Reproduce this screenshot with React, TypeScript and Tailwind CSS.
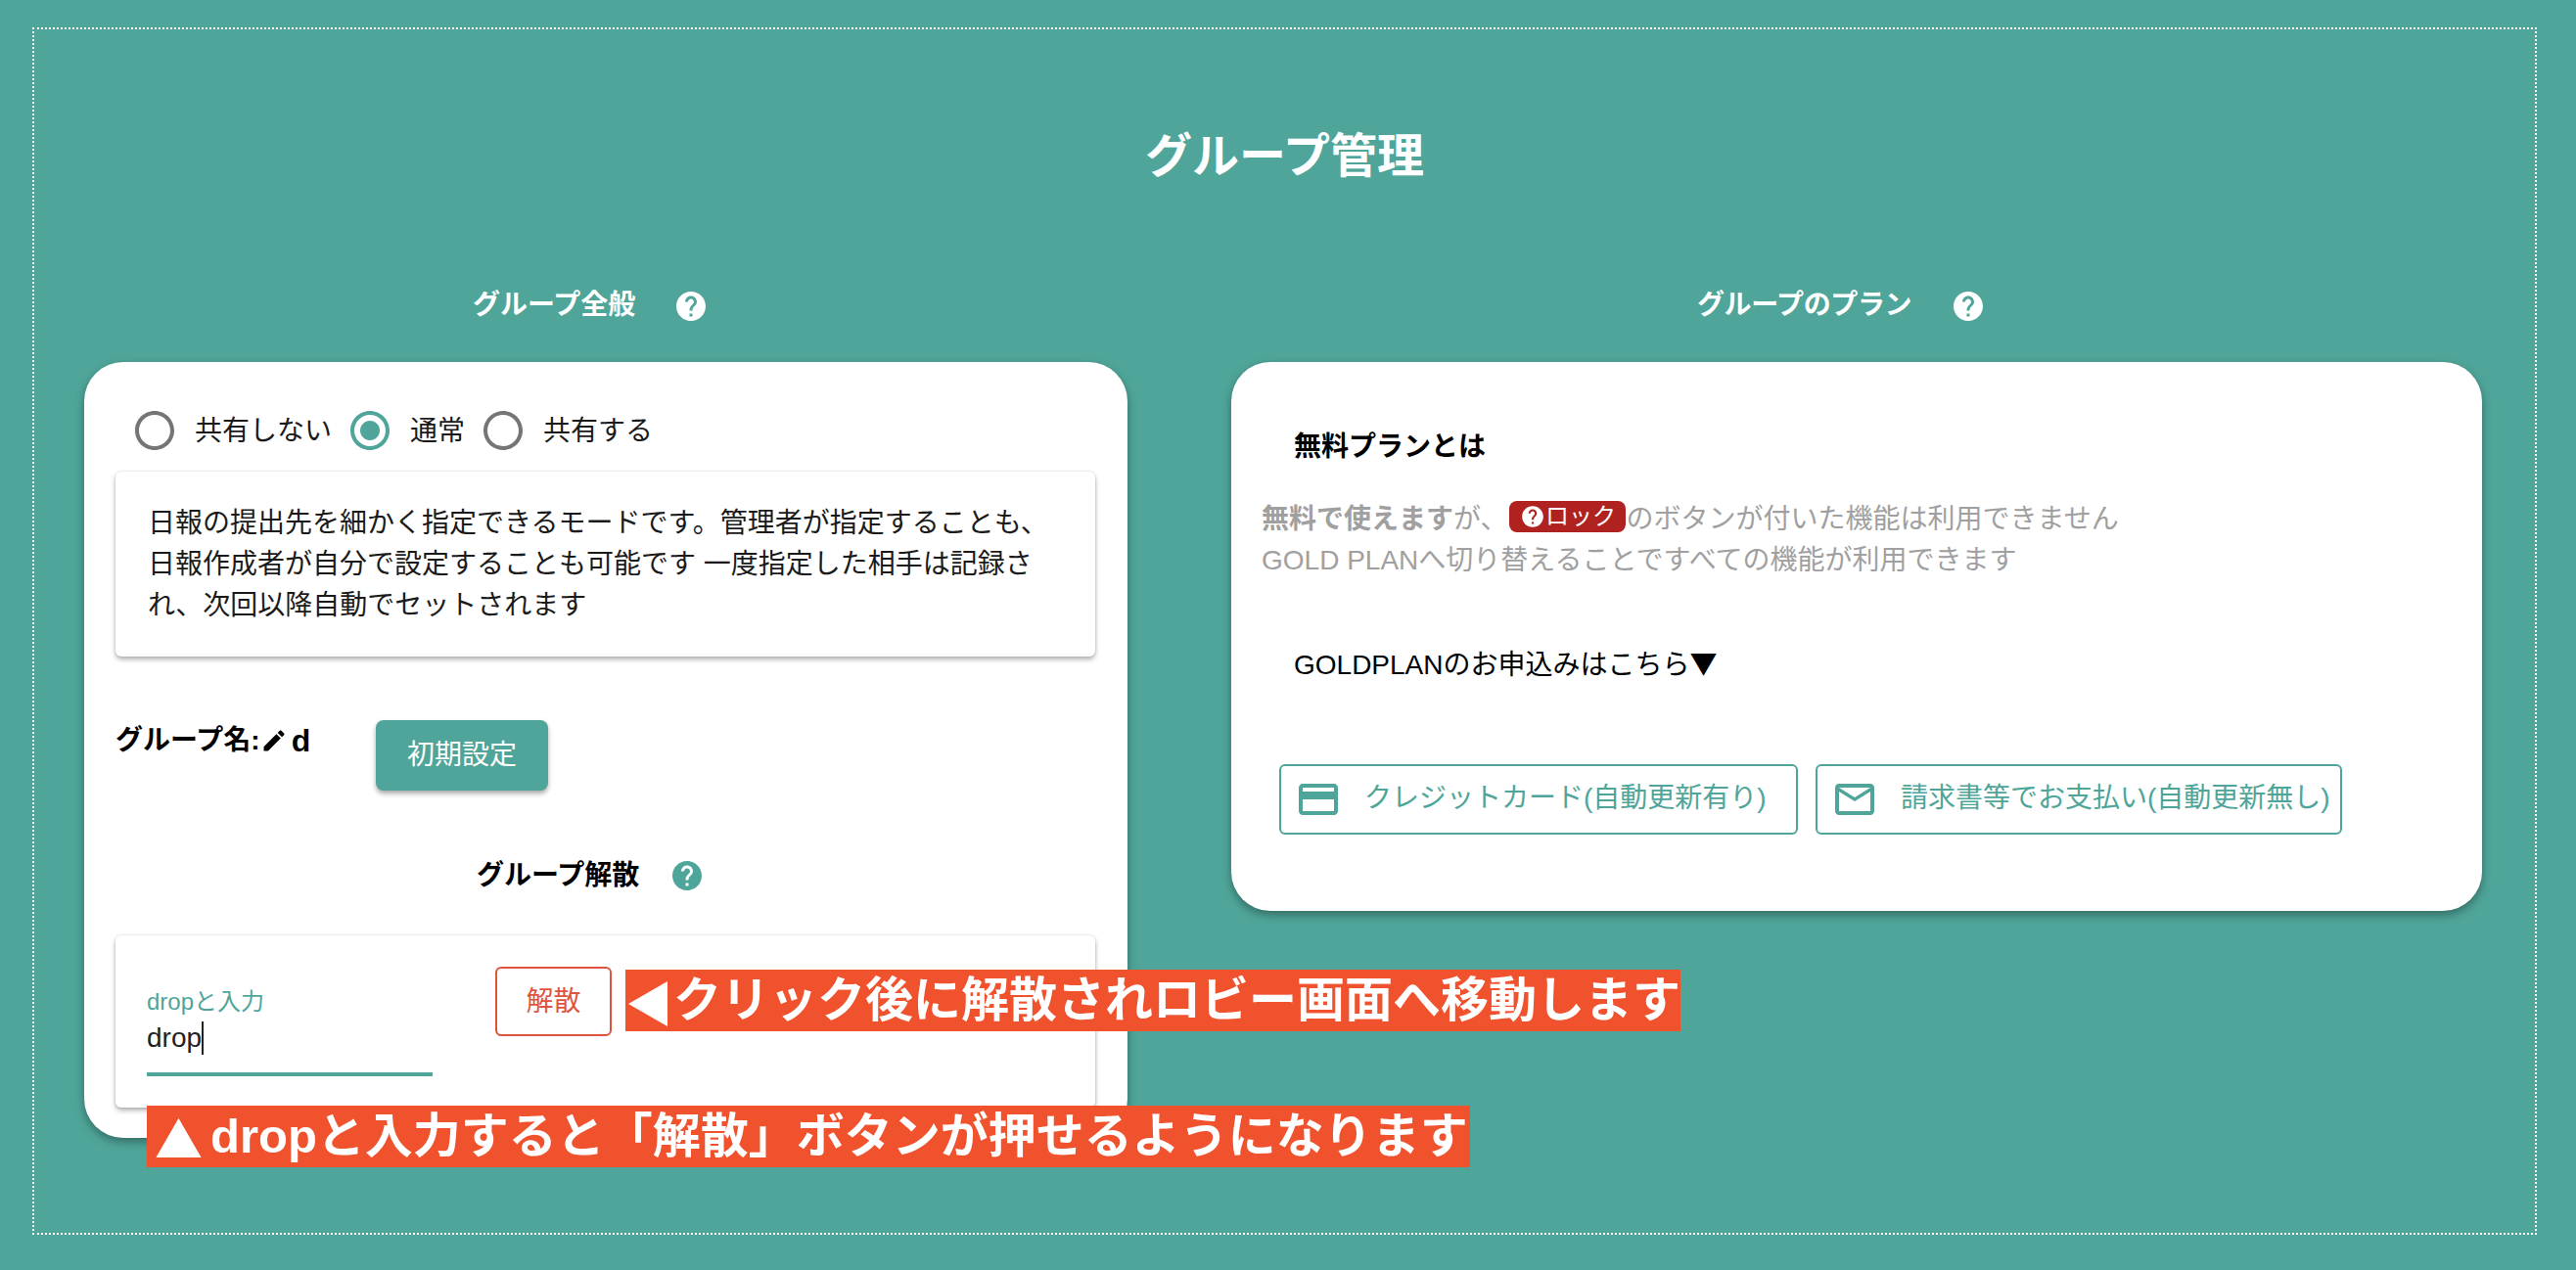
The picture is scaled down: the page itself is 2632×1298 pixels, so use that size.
const teal = 'text-[#4fa599]';

const HELP =
    'M12 2C6.48 2 2 6.48 2 12s4.48 10 10 10 10-4.48 10-10S17.52 2 12 2zm1 17h-2v-2h2v2zm2.07-7.75l-.9.92C13.45 12.9 13 13.5 13 15h-2v-.5c0-1.1.45-2.1 1.17-2.83l1.24-1.26c.37-.36.59-.86.59-1.41 0-1.1-.9-2-2-2s-2 .9-2 2H8c0-2.21 1.79-4 4-4s4 1.79 4 4c0 .88-.36 1.68-.93 2.25z';
const RADIO_OFF =
    'M12 2C6.48 2 2 6.48 2 12s4.48 10 10 10 10-4.48 10-10S17.52 2 12 2zm0 18c-4.42 0-8-3.58-8-8s3.58-8 8-8 8 3.58 8 8-3.58 8-8 8z';
const RADIO_DOT = 'M12 7c-2.76 0-5 2.24-5 5s2.24 5 5 5 5-2.24 5-5-2.24-5-5-5z';
const EDIT =
    'M3 17.25V21h3.75L17.81 9.94l-3.75-3.75L3 17.25zM20.71 7.04c.39-.39.39-1.02 0-1.41l-2.34-2.34c-.39-.39-1.02-.39-1.41 0l-1.83 1.83 3.75 3.75 1.83-1.83z';
const CARD =
    'M20 4H4c-1.11 0-1.99.89-1.99 2L2 18c0 1.11.89 2 2 2h16c1.11 0 2-.89 2-2V6c0-1.11-.89-2-2-2zm0 14H4v-6h16v6zm0-10H4V6h16v2z';
const MAIL =
    'M20 4H4c-1.1 0-1.99.9-1.99 2L2 18c0 1.1.9 2 2 2h16c1.1 0 2-.9 2-2V6c0-1.1-.9-2-2-2zm0 14H4V8l8 5 8-5v10zm-8-7L4 6h16l-8 5z';

const Icon = ({ d, className }: { d: string; className: string }) => (
    <svg viewBox="0 0 24 24" fill="currentColor" className={`shrink-0 ${className}`}>
        <path d={d} />
    </svg>
);

const Radio = ({ label, checked }: { label: string; checked?: boolean }) => (
    <div className="flex items-center">
        <svg
            viewBox="0 0 24 24"
            fill="currentColor"
            className={`w-[48px] h-[48px] ${checked ? teal : 'text-[#757575]'}`}
        >
            <path d={RADIO_OFF} />
            {checked && <path d={RADIO_DOT} />}
        </svg>
        <span className="ml-[17px] mr-[15px] pt-[2px] text-[28px] leading-[42px] text-[#1a1a1a]">{label}</span>
    </div>
);

const Paper: React.FC<{ className?: string; children: React.ReactNode }> = ({ className, children }) => (
    <div
        className={`ml-[32px] w-[1001px] bg-white rounded-[6px] shadow-[0_3px_5px_rgba(0,0,0,0.3),0_0_3px_rgba(0,0,0,0.12)] ${className ?? ''}`}
    >
        {children}
    </div>
);

const PayButton = ({ icon, label, width }: { icon: string; label: string; width: string }) => (
    <button
        className={`flex items-center h-[72px] pl-[14px] border-2 border-[#4fa599] rounded-[6px] text-[28px] ${teal} ${width}`}
    >
        <Icon d={icon} className="w-[48px] h-[48px]" />
        <span className="ml-[23px] pb-[2px] whitespace-nowrap">{label}</span>
    </button>
);

export default function App() {
    return (
        <div
            className="relative w-[2632px] h-[1298px] overflow-hidden bg-[#4fa599] pt-[28px] pl-[33px]"
            style={{ fontFamily: '"Liberation Sans", "Noto Sans CJK JP", sans-serif' }}
        >
            <div className="w-[2559px] h-[1234px] border-2 border-dotted border-white">
                <h1 className="pt-[98px] text-center text-[48px] leading-[64px] font-bold text-white">グループ管理</h1>

                <div className="flex pl-[51px] gap-[106px]">
                    {/* left column */}
                    <div className="w-[1066px]">
                        <div className="flex items-center h-[42px] mt-[99px] pl-[397px] text-white">
                            <span className="text-[28px] font-bold">グループ全般</span>
                            <Icon d={HELP} className="w-[36px] h-[36px] ml-[39px] mt-[2px]" />
                        </div>
                        <div className="mt-[37px] h-[793px] bg-white rounded-[40px] shadow-[0_4px_10px_rgba(0,0,0,0.35)] pt-[46px]">
                            <div className="flex pl-[48px]">
                                <Radio label="共有しない" />
                                <Radio label="通常" checked />
                                <Radio label="共有する" />
                            </div>
                            <Paper className="mt-[18px] h-[189px] pl-[33px] pt-[32px] text-[28px] leading-[42px] text-[#1a1a1a]">
                                日報の提出先を細かく指定できるモードです。管理者が指定することも、
                                <br />
                                日報作成者が自分で設定することも可能です 一度指定した相手は記録さ
                                <br />
                                れ、次回以降自動でセットされます
                            </Paper>
                            <div className="flex items-start ml-[32px] mt-[65px]">
                                <div className="flex items-center w-[266px] h-[42px] text-[28px] font-bold text-black">
                                    <span>グループ名:</span>
                                    <Icon d={EDIT} className="w-[28px] h-[28px]" />
                                    <span className="ml-[4px] text-[32px]">d</span>
                                </div>
                                <button className="w-[176px] h-[72px] bg-[#4fa599] rounded-[8px] text-[28px] text-white shadow-[0_3px_5px_rgba(0,0,0,0.35)]">
                                    初期設定
                                </button>
                            </div>
                            <div className="flex items-center h-[42px] mt-[66px] pl-[401px] text-black">
                                <span className="text-[28px] font-bold">グループ解散</span>
                                <Icon d={HELP} className={`w-[36px] h-[36px] ml-[31px] ${teal}`} />
                            </div>
                            <Paper className="mt-[40px] h-[176px] flex items-start">
                                <div className="ml-[32px] mt-[52px] w-[292px]">
                                    <div className={`text-[24px] leading-[32px] ${teal}`}>dropと入力</div>
                                    <div className="mt-[1px] flex items-center h-[40px] text-[28px] text-[#222]">
                                        drop
                                        <span className="w-[2px] h-[34px] bg-[#222]" />
                                    </div>
                                    <div className="mt-[15px] h-[4px] bg-[#4fa599]" />
                                </div>
                                <button className="ml-[64px] mt-[32px] w-[119px] h-[71px] border-2 border-[#e0533d] rounded-[6px] text-[28px] text-[#e0533d]">
                                    解散
                                </button>
                            </Paper>
                        </div>
                    </div>

                    {/* right column */}
                    <div className="w-[1278px]">
                        <div className="flex items-center h-[42px] mt-[99px] pl-[476px] text-white">
                            <span className="text-[28px] tracking-[-0.4px] font-bold">グループのプラン</span>
                            <Icon d={HELP} className="w-[36px] h-[36px] ml-[40px] mt-[2px]" />
                        </div>
                        <div className="mt-[37px] h-[561px] bg-white rounded-[40px] shadow-[0_4px_10px_rgba(0,0,0,0.35)] pt-[66px]">
                            <div className="pl-[64px] text-[28px] leading-[42px] font-bold text-black">無料プランとは</div>
                            <div className="mt-[32px] pl-[31px] text-[28px] leading-[42px] text-[#a0a0a0]">
                                <div className="flex items-center whitespace-nowrap">
                                    <b>無料で使えます</b>が、
                                    <span className="flex items-center justify-center w-[119px] h-[32px] ml-[2px] mb-[6px] rounded-[8px] bg-[#b0221f] text-[24px] text-white">
                                        <Icon d={HELP} className="w-[26px] h-[26px]" />
                                        ロック
                                    </span>
                                    のボタンが付いた機能は利用できません
                                </div>
                                <div>GOLD PLANへ切り替えることですべての機能が利用できます</div>
                            </div>
                            <div className="mt-[62px] pl-[64px] text-[28px] leading-[42px] text-black">
                                GOLDPLANのお申込みはこちら<span className="font-['Noto_Sans_CJK_JP']">▼</span>
                            </div>
                            <div className="flex mt-[80px] pl-[49px] gap-[18px]">
                                <PayButton icon={CARD} label="クレジットカード(自動更新有り)" width="w-[530px]" />
                                <PayButton icon={MAIL} label="請求書等でお支払い(自動更新無し)" width="w-[538px]" />
                            </div>
                        </div>
                    </div>
                </div>
            </div>

            {/* annotation labels laid over the screenshot */}
            <div className="absolute left-[639px] top-[991px] w-[1078px] h-[63px] flex items-center bg-[#f0522d] text-[49px] font-bold text-white whitespace-nowrap">
                <span className="w-[54px] text-center font-['Noto_Sans_CJK_JP']">◀</span>
                クリック後に解散されロビー画面へ移動します
            </div>
            <div className="absolute left-[150px] top-[1130px] w-[1352px] h-[63px] flex items-center bg-[#f0522d] text-[49px] font-bold text-white whitespace-nowrap">
                <span className="w-[65px] text-center font-['Noto_Sans_CJK_JP']">▲</span>
                dropと入力すると「解散」ボタンが押せるようになります
            </div>
        </div>
    );
}
